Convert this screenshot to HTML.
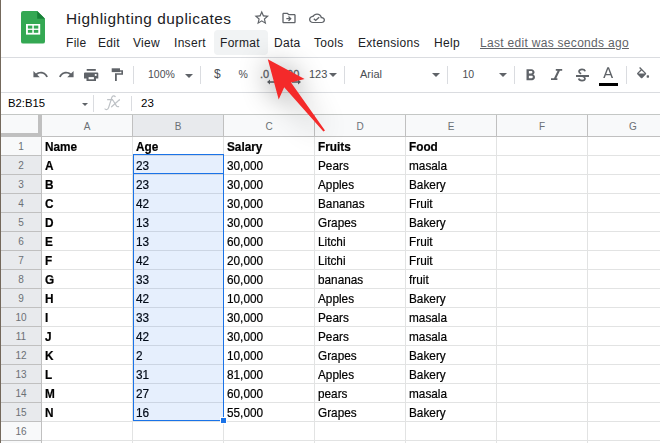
<!DOCTYPE html>
<html><head><meta charset="utf-8">
<style>
*{margin:0;padding:0;box-sizing:border-box}
html,body{width:660px;height:443px;overflow:hidden;background:#fff;font-family:"Liberation Sans",sans-serif}
.a{position:absolute}
.menu{font-size:12px;color:#202124;top:36px;line-height:14px;letter-spacing:0.3px}
.tb{color:#4a4e53;font-size:10.5px;top:68px;line-height:12px}
.sep{width:1px;background:#dadce0;top:66px;height:18px}
.tri{width:0;height:0;border-left:4px solid transparent;border-right:4px solid transparent;border-top:4px solid #5f6368}
.ch{top:115px;height:21px;background:#f8f9fa;color:#6b7075;font-size:10px;text-align:center;line-height:23px}
.rh{left:1px;width:40px;background:#f8f9fa;color:#6b7075;font-size:10px;text-align:center;height:18px;line-height:19.8px}
.vl{width:1px;background:#e2e3e3;top:137px;height:306px}
.hl{height:1px;background:#e2e3e3;left:42px;width:618px}
.c{font-size:11.8px;color:#000;line-height:14px;transform:scaleY(1.12);transform-origin:0 11px;-webkit-text-stroke:0.2px #000}
.b{font-weight:bold}
</style></head><body>
<!-- left dark border -->
<div class="a" style="left:0;top:0;width:1px;height:443px;background:#74695c;z-index:5"></div>

<!-- sheets logo -->
<svg class="a" style="left:21px;top:11px" width="24" height="33" viewBox="0 0 24 33">
<path d="M2.2 0H16.2L24 7.8V30.4A2.2 2.2 0 0 1 21.8 32.6H2.2A2.2 2.2 0 0 1 0 30.4V2.2A2.2 2.2 0 0 1 2.2 0Z" fill="#34a853"/>
<path d="M16.2 0L24 7.8H16.2Z" fill="#188038"/>
<rect x="5" y="13" width="14.2" height="10.6" fill="#fff"/>
<rect x="6.9" y="14.6" width="4.4" height="3" fill="#34a853"/>
<rect x="12.8" y="14.6" width="4.5" height="3" fill="#34a853"/>
<rect x="6.9" y="18.9" width="4.4" height="2.9" fill="#34a853"/>
<rect x="12.8" y="18.9" width="4.5" height="2.9" fill="#34a853"/>
</svg>

<div class="a" style="left:66px;top:9.9px;font-size:15.4px;color:#202124;line-height:18px;letter-spacing:0.5px">Highlighting duplicates</div>

<!-- title icons -->
<svg class="a" style="left:253.3px;top:9.3px" width="17.5" height="17.5" viewBox="0 0 24 24"><path fill="#5f6368" d="M22 9.24l-7.19-.62L12 2 9.19 8.63 2 9.24l5.46 4.73L5.82 21 12 17.27 18.18 21l-1.63-7.03L22 9.24zM12 15.4l-3.76 2.27 1-4.28-3.32-2.88 4.38-.38L12 6.1l1.71 4.04 4.38.38-3.32 2.88 1 4.28L12 15.4z"/></svg>
<svg class="a" style="left:281px;top:10px" width="16" height="16" viewBox="0 0 24 24"><path fill="#5f6368" d="M20 6h-8l-2-2H4c-1.1 0-2 .9-2 2v12c0 1.1.9 2 2 2h16c1.1 0 2-.9 2-2V8c0-1.1-.9-2-2-2zm0 12H4V6h5.17l2 2H20v10zm-7.84-6H8v2h4.16l-1.59 1.59L11.99 17 16 13.01 11.99 9l-1.41 1.41L12.16 12z"/></svg>
<svg class="a" style="left:308.5px;top:11px" width="16" height="14.5" viewBox="0 0 24 24" preserveAspectRatio="none"><path fill="#5f6368" d="M19.35 10.04C18.67 6.59 15.64 4 12 4 9.11 4 6.6 5.64 5.35 8.04 2.34 8.36 0 10.91 0 14c0 3.31 2.69 6 6 6h13c2.76 0 5-2.24 5-5 0-2.64-2.05-4.78-4.65-4.96zM19 18H6c-2.21 0-4-1.79-4-4s1.79-4 4-4h.71C7.37 7.69 9.48 6 12 6c3.04 0 5.5 2.46 5.5 5.5v.5H19c1.66 0 3 1.34 3 3s-1.34 3-3 3zm-9-3.82l-2.09-2.09L6.5 13.5 10 17l6.01-6.01-1.41-1.41z"/></svg>

<!-- menu -->
<div class="a" style="left:214px;top:30px;width:54px;height:25px;background:#f1f3f4;border-radius:4px"></div>
<div class="a menu" style="left:66px">File</div>
<div class="a menu" style="left:98px">Edit</div>
<div class="a menu" style="left:133px">View</div>
<div class="a menu" style="left:174px">Insert</div>
<div class="a menu" style="left:220px">Format</div>
<div class="a menu" style="left:274px">Data</div>
<div class="a menu" style="left:314px">Tools</div>
<div class="a menu" style="left:358px">Extensions</div>
<div class="a menu" style="left:434px">Help</div>
<div class="a menu" style="left:480px;color:#5f6368;text-decoration:underline">Last edit was seconds ago</div>

<!-- lines -->
<div class="a" style="left:0;top:57px;width:660px;height:1px;background:#dadce0"></div>
<div class="a" style="left:0;top:92px;width:660px;height:1px;background:#dadce0"></div>
<div class="a" style="left:0;top:114px;width:660px;height:1px;background:#c4c7c5"></div>

<!-- toolbar -->
<svg class="a" style="left:31.6px;top:65.7px" width="17" height="17" viewBox="0 0 24 24"><path fill="#5f6368" d="M12.5 8c-2.65 0-5.05.99-6.9 2.6L2 7v9h9l-3.62-3.62c1.39-1.16 3.16-1.88 5.12-1.88 3.54 0 6.55 2.31 7.6 5.5l2.37-.78C21.08 11.03 17.15 8 12.5 8z"/></svg>
<svg class="a" style="left:57.9px;top:65.7px" width="17" height="17" viewBox="0 0 24 24"><path fill="#5f6368" d="M18.4 10.6C16.55 8.99 14.15 8 11.5 8c-4.65 0-8.58 3.03-9.96 7.22L3.9 16c1.05-3.19 4.05-5.5 7.6-5.5 1.95 0 3.73.72 5.12 1.88L13 16h9V7l-3.6 3.6z"/></svg>
<svg class="a" style="left:84px;top:68.7px" width="15" height="13" viewBox="0 0 15 13"><g fill="#5f6368"><rect x="2.7" y="0" width="9.1" height="1.8"/><path d="M1 3.5H13.3A1 1 0 0 1 14.3 4.5V9.6H12V12.1H2.5V9.6H0V4.5A1 1 0 0 1 1 3.5Z"/></g><rect x="4.6" y="8.1" width="5.3" height="2.2" fill="#fff"/><rect x="10.8" y="5" width="1.8" height="1.9" fill="#fff"/></svg>
<svg class="a" style="left:111px;top:67.7px" width="13" height="13" viewBox="0 0 13 13"><g fill="#5f6368"><rect x="0.7" y="0.3" width="8.3" height="3.8"/><path d="M9 2.3H12V6.8H5.8V12.9H4V5.3H10.4V3.7H9Z"/></g></svg>
<div class="a sep" style="left:133px"></div>
<div class="a tb" style="left:148px">100%</div>
<div class="a tri" style="left:185px;top:73.5px"></div>
<div class="a sep" style="left:200px"></div>
<div class="a tb" style="left:214px;font-size:12px;top:68px">$</div>
<div class="a tb" style="left:238.5px">%</div>
<div class="a tb" style="left:260px;top:67.5px;font-size:11px;color:#5f6368;-webkit-text-stroke:0.3px #5f6368">.0</div>
<div class="a tb" style="left:284px;top:67.5px;font-size:11px;color:#5f6368;-webkit-text-stroke:0.3px #5f6368">.00</div>
<svg class="a" style="left:266px;top:79px" width="36" height="6" viewBox="0 0 36 6"><g fill="#5f6368"><path d="M1 3L4 0.5V2.3H10V3.7H4V5.5Z"/><path d="M35 3L32 0.5V2.3H26V3.7H32V5.5Z"/></g></svg>
<div class="a tb" style="left:309px;font-size:11px;top:67.5px">123</div>
<div class="a tri" style="left:329px;top:73.3px"></div>
<div class="a sep" style="left:344px"></div>
<div class="a tb" style="left:360px;font-size:11px;top:67.5px">Arial</div>
<div class="a tri" style="left:432px;top:73.2px"></div>
<div class="a sep" style="left:447px"></div>
<div class="a tb" style="left:462.5px">10</div>
<div class="a tri" style="left:499px;top:73.2px"></div>
<div class="a sep" style="left:514px"></div>
<svg class="a" style="left:520.8px;top:65.9px" width="18.9" height="18.9" viewBox="0 0 24 24"><path fill="#5f6368" d="M15.6 10.79c.97-.67 1.65-1.77 1.65-2.79 0-2.26-1.75-4-4-4H7v14h7.04c2.09 0 3.71-1.7 3.71-3.79 0-1.52-.86-2.82-2.15-3.42zM10 6.5h3c.83 0 1.5.67 1.5 1.5s-.67 1.5-1.5 1.5h-3v-3zm3.5 9H10v-3h3.5c.83 0 1.5.67 1.5 1.5s-.67 1.5-1.5 1.5z"/></svg>
<svg class="a" style="left:550px;top:68px" width="14" height="14" viewBox="0 0 14 14"><path fill="#5f6368" d="M5.8 1H12.2V2.8H5.8ZM1 10.2H7.4V12H1ZM7.6 2.8H9.9L6.3 10.2H4Z"/></svg>
<div class="a" style="left:576px;top:75px;width:12.5px;height:1.6px;background:#5f6368"></div>
<svg class="a" style="left:577px;top:68px" width="10" height="14" viewBox="0 0 10 14"><path fill="none" stroke="#5f6368" stroke-width="1.7" d="M8.2 3.2C7.8 2 6.6 1.3 5 1.3 3.2 1.3 2 2.3 2 3.6 2 4.8 3 5.4 4.2 5.8M5.6 8.2C7 8.7 8 9.3 8 10.5 8 11.8 6.7 12.6 5 12.6 3.3 12.6 2 11.8 1.7 10.5"/></svg>
<svg class="a" style="left:599.1px;top:65px" width="18.3" height="18.3" viewBox="0 0 24 24"><path fill="#5f6368" d="M5.49 17h2.1l1.27-3.58h6.28L16.41 17h2.1L13.1 3h-2.2L5.49 17zm4-5.3l2.45-6.5h.12l2.45 6.5H9.49z"/></svg>
<div class="a" style="left:599px;top:83px;width:19px;height:3px;background:#000"></div>
<div class="a sep" style="left:626px"></div>
<svg class="a" style="left:634.9px;top:67.2px" width="15.9" height="15.9" viewBox="0 0 24 24"><path fill="#5f6368" d="M16.56 8.94L7.62 0 6.21 1.41l2.38 2.38-5.15 5.15c-.59.59-.59 1.54 0 2.12l5.5 5.5c.29.29.68.44 1.06.44s.77-.15 1.06-.44l5.5-5.5c.59-.58.59-1.530 0-2.11zM5.21 10L10 5.21 14.79 10H5.21z"/><rect x="17.6" y="12.6" width="3.6" height="3.6" rx="1" fill="#5f6368"/></svg>

<!-- formula bar -->
<div class="a" style="left:8px;top:95.5px;font-size:11.3px;color:#000;line-height:14px">B2:B15</div>
<div class="a tri" style="left:82px;top:102.5px;border-left-width:3px;border-right-width:3px;border-top-width:3px"></div>
<div class="a" style="left:93px;top:95px;width:1px;height:17px;background:#dadce0"></div>
<svg class="a" style="left:98px;top:92px" width="30" height="22" viewBox="0 0 30 22"><g fill="none" stroke="#bec2c6" stroke-width="1.2" stroke-linecap="round"><path d="M17.2 4.6C16.6 3.6 14.6 3.4 13.9 5.3L10.6 15.6C9.9 17.8 7.8 18 7 17"/><path d="M9.6 7.7H14.4"/><path d="M13.2 7.6C14.4 7.3 15 8 15.6 9.2L18.4 13.9C18.9 14.7 19.6 14.9 20.6 14.6"/><path d="M21.4 7.7L13.6 14.8"/></g></svg>
<div class="a" style="left:131px;top:96px;width:1px;height:15px;background:#dadce0"></div>
<div class="a" style="left:141px;top:96px;font-size:11.5px;color:#000;line-height:14px">23</div>

<!-- headers -->
<!--GRID-->
<div class="a" style="left:1px;top:115px;width:37px;height:18px;background:#f8f9fa"></div>
<div class="a" style="left:38px;top:115px;width:4px;height:22px;background:#c0c0c0"></div>
<div class="a" style="left:1px;top:133px;width:41px;height:4px;background:#c0c0c0"></div>
<div class="a ch" style="left:42px;width:90px;background:#f8f9fa">A</div>
<div class="a" style="left:132px;top:115px;width:1px;height:21px;background:#c0c0c0"></div>
<div class="a ch" style="left:133px;width:90px;background:#e8eaed">B</div>
<div class="a" style="left:223px;top:115px;width:1px;height:21px;background:#c0c0c0"></div>
<div class="a ch" style="left:224px;width:90px;background:#f8f9fa">C</div>
<div class="a" style="left:314px;top:115px;width:1px;height:21px;background:#c0c0c0"></div>
<div class="a ch" style="left:315px;width:90px;background:#f8f9fa">D</div>
<div class="a" style="left:405px;top:115px;width:1px;height:21px;background:#c0c0c0"></div>
<div class="a ch" style="left:406px;width:90px;background:#f8f9fa">E</div>
<div class="a" style="left:496px;top:115px;width:1px;height:21px;background:#c0c0c0"></div>
<div class="a ch" style="left:497px;width:90px;background:#f8f9fa">F</div>
<div class="a" style="left:587px;top:115px;width:1px;height:21px;background:#c0c0c0"></div>
<div class="a ch" style="left:588px;width:90px;background:#f8f9fa">G</div>
<div class="a" style="left:678px;top:115px;width:1px;height:21px;background:#c0c0c0"></div>
<div class="a" style="left:42px;top:136px;width:618px;height:1px;background:#c0c0c0"></div>
<div class="a rh" style="top:137px;background:#f8f9fa">1</div>
<div class="a" style="left:1px;top:155px;width:40px;height:1px;background:#c0c0c0"></div>
<div class="a rh" style="top:156px;background:#e8eaed">2</div>
<div class="a" style="left:1px;top:174px;width:40px;height:1px;background:#c0c0c0"></div>
<div class="a rh" style="top:175px;background:#e8eaed">3</div>
<div class="a" style="left:1px;top:193px;width:40px;height:1px;background:#c0c0c0"></div>
<div class="a rh" style="top:194px;background:#e8eaed">4</div>
<div class="a" style="left:1px;top:212px;width:40px;height:1px;background:#c0c0c0"></div>
<div class="a rh" style="top:213px;background:#e8eaed">5</div>
<div class="a" style="left:1px;top:231px;width:40px;height:1px;background:#c0c0c0"></div>
<div class="a rh" style="top:232px;background:#e8eaed">6</div>
<div class="a" style="left:1px;top:250px;width:40px;height:1px;background:#c0c0c0"></div>
<div class="a rh" style="top:251px;background:#e8eaed">7</div>
<div class="a" style="left:1px;top:269px;width:40px;height:1px;background:#c0c0c0"></div>
<div class="a rh" style="top:270px;background:#e8eaed">8</div>
<div class="a" style="left:1px;top:288px;width:40px;height:1px;background:#c0c0c0"></div>
<div class="a rh" style="top:289px;background:#e8eaed">9</div>
<div class="a" style="left:1px;top:307px;width:40px;height:1px;background:#c0c0c0"></div>
<div class="a rh" style="top:308px;background:#e8eaed">10</div>
<div class="a" style="left:1px;top:326px;width:40px;height:1px;background:#c0c0c0"></div>
<div class="a rh" style="top:327px;background:#e8eaed">11</div>
<div class="a" style="left:1px;top:345px;width:40px;height:1px;background:#c0c0c0"></div>
<div class="a rh" style="top:346px;background:#e8eaed">12</div>
<div class="a" style="left:1px;top:364px;width:40px;height:1px;background:#c0c0c0"></div>
<div class="a rh" style="top:365px;background:#e8eaed">13</div>
<div class="a" style="left:1px;top:383px;width:40px;height:1px;background:#c0c0c0"></div>
<div class="a rh" style="top:384px;background:#e8eaed">14</div>
<div class="a" style="left:1px;top:402px;width:40px;height:1px;background:#c0c0c0"></div>
<div class="a rh" style="top:403px;background:#e8eaed">15</div>
<div class="a" style="left:1px;top:421px;width:40px;height:1px;background:#c0c0c0"></div>
<div class="a rh" style="top:422px;background:#f8f9fa">16</div>
<div class="a" style="left:1px;top:440px;width:40px;height:1px;background:#c0c0c0"></div>
<div class="a" style="left:1px;top:441px;width:40px;height:2px;background:#f8f9fa"></div>
<div class="a" style="left:41px;top:137px;width:1px;height:306px;background:#c0c0c0"></div>
<div class="a hl" style="top:155px"></div>
<div class="a hl" style="top:174px"></div>
<div class="a hl" style="top:193px"></div>
<div class="a hl" style="top:212px"></div>
<div class="a hl" style="top:231px"></div>
<div class="a hl" style="top:250px"></div>
<div class="a hl" style="top:269px"></div>
<div class="a hl" style="top:288px"></div>
<div class="a hl" style="top:307px"></div>
<div class="a hl" style="top:326px"></div>
<div class="a hl" style="top:345px"></div>
<div class="a hl" style="top:364px"></div>
<div class="a hl" style="top:383px"></div>
<div class="a hl" style="top:402px"></div>
<div class="a hl" style="top:421px"></div>
<div class="a hl" style="top:440px"></div>
<div class="a vl" style="left:132px"></div>
<div class="a vl" style="left:223px"></div>
<div class="a vl" style="left:314px"></div>
<div class="a vl" style="left:405px"></div>
<div class="a vl" style="left:496px"></div>
<div class="a vl" style="left:587px"></div>
<div class="a vl" style="left:678px"></div>
<div class="a c b" style="left:45px;top:140px">Name</div>
<div class="a c b" style="left:136px;top:140px">Age</div>
<div class="a c b" style="left:227px;top:140px">Salary</div>
<div class="a c b" style="left:318px;top:140px">Fruits</div>
<div class="a c b" style="left:409px;top:140px">Food</div>
<div class="a c b" style="left:45px;top:159px">A</div>
<div class="a c" style="left:136px;top:159px">23</div>
<div class="a c" style="left:227px;top:159px">30,000</div>
<div class="a c" style="left:318px;top:159px">Pears</div>
<div class="a c" style="left:409px;top:159px">masala</div>
<div class="a c b" style="left:45px;top:178px">B</div>
<div class="a c" style="left:136px;top:178px">23</div>
<div class="a c" style="left:227px;top:178px">30,000</div>
<div class="a c" style="left:318px;top:178px">Apples</div>
<div class="a c" style="left:409px;top:178px">Bakery</div>
<div class="a c b" style="left:45px;top:197px">C</div>
<div class="a c" style="left:136px;top:197px">42</div>
<div class="a c" style="left:227px;top:197px">30,000</div>
<div class="a c" style="left:318px;top:197px">Bananas</div>
<div class="a c" style="left:409px;top:197px">Fruit</div>
<div class="a c b" style="left:45px;top:216px">D</div>
<div class="a c" style="left:136px;top:216px">13</div>
<div class="a c" style="left:227px;top:216px">30,000</div>
<div class="a c" style="left:318px;top:216px">Grapes</div>
<div class="a c" style="left:409px;top:216px">Bakery</div>
<div class="a c b" style="left:45px;top:235px">E</div>
<div class="a c" style="left:136px;top:235px">13</div>
<div class="a c" style="left:227px;top:235px">60,000</div>
<div class="a c" style="left:318px;top:235px">Litchi</div>
<div class="a c" style="left:409px;top:235px">Fruit</div>
<div class="a c b" style="left:45px;top:254px">F</div>
<div class="a c" style="left:136px;top:254px">42</div>
<div class="a c" style="left:227px;top:254px">20,000</div>
<div class="a c" style="left:318px;top:254px">Litchi</div>
<div class="a c" style="left:409px;top:254px">Fruit</div>
<div class="a c b" style="left:45px;top:273px">G</div>
<div class="a c" style="left:136px;top:273px">33</div>
<div class="a c" style="left:227px;top:273px">60,000</div>
<div class="a c" style="left:318px;top:273px">bananas</div>
<div class="a c" style="left:409px;top:273px">fruit</div>
<div class="a c b" style="left:45px;top:292px">H</div>
<div class="a c" style="left:136px;top:292px">42</div>
<div class="a c" style="left:227px;top:292px">10,000</div>
<div class="a c" style="left:318px;top:292px">Apples</div>
<div class="a c" style="left:409px;top:292px">Bakery</div>
<div class="a c b" style="left:45px;top:311px">I</div>
<div class="a c" style="left:136px;top:311px">33</div>
<div class="a c" style="left:227px;top:311px">30,000</div>
<div class="a c" style="left:318px;top:311px">Pears</div>
<div class="a c" style="left:409px;top:311px">masala</div>
<div class="a c b" style="left:45px;top:330px">J</div>
<div class="a c" style="left:136px;top:330px">42</div>
<div class="a c" style="left:227px;top:330px">30,000</div>
<div class="a c" style="left:318px;top:330px">Pears</div>
<div class="a c" style="left:409px;top:330px">masala</div>
<div class="a c b" style="left:45px;top:349px">K</div>
<div class="a c" style="left:136px;top:349px">2</div>
<div class="a c" style="left:227px;top:349px">10,000</div>
<div class="a c" style="left:318px;top:349px">Grapes</div>
<div class="a c" style="left:409px;top:349px">Bakery</div>
<div class="a c b" style="left:45px;top:368px">L</div>
<div class="a c" style="left:136px;top:368px">31</div>
<div class="a c" style="left:227px;top:368px">81,000</div>
<div class="a c" style="left:318px;top:368px">Apples</div>
<div class="a c" style="left:409px;top:368px">Bakery</div>
<div class="a c b" style="left:45px;top:387px">M</div>
<div class="a c" style="left:136px;top:387px">27</div>
<div class="a c" style="left:227px;top:387px">60,000</div>
<div class="a c" style="left:318px;top:387px">pears</div>
<div class="a c" style="left:409px;top:387px">masala</div>
<div class="a c b" style="left:45px;top:406px">N</div>
<div class="a c" style="left:136px;top:406px">16</div>
<div class="a c" style="left:227px;top:406px">55,000</div>
<div class="a c" style="left:318px;top:406px">Grapes</div>
<div class="a c" style="left:409px;top:406px">Bakery</div>
<div class="a" style="left:133px;top:155px;width:91px;height:266px;background:rgba(14,101,235,0.1)"></div>
<div class="a" style="left:133px;top:154px;width:91px;height:267px;border:1.4px solid #1a73e8"></div>
<div class="a" style="left:133px;top:173.1px;width:91px;height:1.3px;background:#1a73e8"></div>
<div class="a" style="left:220px;top:417px;width:7.3px;height:7.3px;background:#1a73e8;border:1px solid #fff"></div>

<!--/GRID-->
<!--ARROW-->
<svg class="a" style="left:0;top:0;z-index:10;filter:drop-shadow(-2px 2px 14px rgba(0,0,0,0.42))" width="660" height="443" viewBox="0 0 660 443"><path d="M267.8 59.3L304.6 79.1 291 82.6 325 130.6 323.4 131.6 284.2 87.3 278.7 99.6Z" fill="#f42a2a"/></svg>
<!--/ARROW-->
</body></html>
